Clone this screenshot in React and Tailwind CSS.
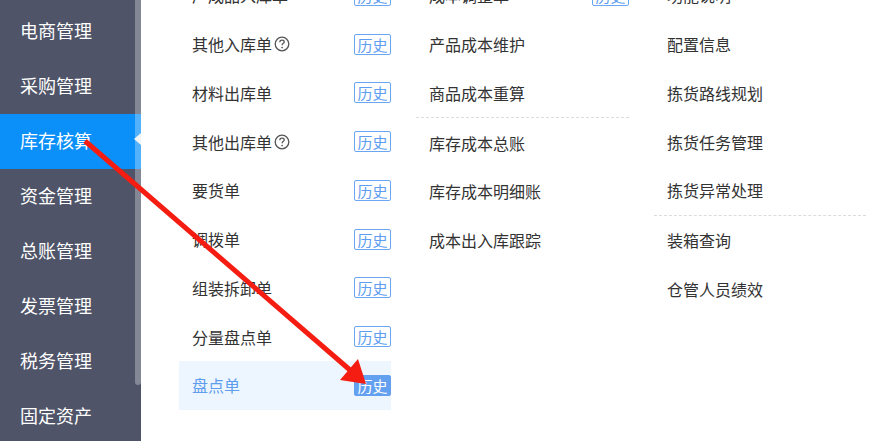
import React from "react";

const font = { fontFamily: '"Noto Sans CJK SC", "Noto Sans", sans-serif' };

const sideItems = ["电商管理", "采购管理", "库存核算", "资金管理", "总账管理", "发票管理", "税务管理", "固定资产"];

function Help() {
  return (
    <svg width="16" height="16" viewBox="0 0 16 16" className="ml-[2px] shrink-0">
      <circle cx="8" cy="8" r="6.8" fill="none" stroke="#555" strokeWidth="1.3" />
      <path d="M5.8 6.2 C5.8 4.7 6.8 4.1 8 4.1 C9.2 4.1 10.2 4.8 10.2 5.9 C10.2 7.3 8.1 7.5 8.1 9.2" fill="none" stroke="#555" strokeWidth="1.3" />
      <circle cx="8.1" cy="11.5" r="0.85" fill="#555" />
    </svg>
  );
}

function Badge({ active }) {
  return (
    <span
      className={
        "w-[37px] h-[21px] rounded-[2px] border flex items-center justify-center text-[15px] leading-none " +
        (active ? "bg-[#63a1f0] border-[#63a1f0] text-white" : "border-[#6ba6f2] text-[#5e9df0] bg-white")
      }
    >
      历史
    </span>
  );
}

function Row({ text, badge, help, active }) {
  return (
    <div
      className={
        "h-[48.75px] shrink-0 flex items-center justify-between pl-[13px] " +
        (active ? "bg-[#edf5fe]" : "")
      }
    >
      <span className={"flex items-center text-[16px] " + (active ? "text-[#5f9eee]" : "text-[#333]")}>
        {text}
        {help && <Help />}
      </span>
      {badge && <Badge active={active} />}
    </div>
  );
}

function Sep() {
  return <div className="border-t border-dashed border-[#dcdcdc] shrink-0" />;
}

export default function App() {
  return (
    <div className="w-[870px] h-[441px] overflow-hidden flex relative bg-white" style={font}>
      {/* Sidebar */}
      <div className="w-[141px] shrink-0 bg-[#4f5468] relative">
        <div className="flex flex-col pt-[4px]">
          {sideItems.map((t, i) => (
            <div
              key={t}
              className={
                "h-[55px] shrink-0 flex items-center pl-[20px] pb-[2px] text-[18px] text-white " +
                (i === 2 ? "bg-[#0b90fa]" : "")
              }
            >
              {t}
            </div>
          ))}
        </div>
        {/* scrollbar thumb */}
        <div className="absolute right-0 top-0 w-[6px] h-[385px] bg-white/30 rounded-b-[3px]" />
        {/* active pointer */}
        <div className="absolute right-0 top-[133px] w-0 h-0 border-y-[6px] border-y-transparent border-r-[7px] border-r-[#f4f4f4]" />
      </div>

      {/* Content */}
      <div className="flex gap-[25px] pl-[38px] mt-[-29px]">
        <div className="w-[212px] flex flex-col">
          <Row text="产成品入库单" badge />
          <Row text="其他入库单" badge help />
          <Row text="材料出库单" badge />
          <Row text="其他出库单" badge help />
          <Row text="要货单" badge />
          <Row text="调拨单" badge />
          <Row text="组装拆卸单" badge />
          <Row text="分量盘点单" badge />
          <Row text="盘点单" badge active />
        </div>
        <div className="w-[213px] flex flex-col">
          <Row text="成本调整单" badge />
          <Row text="产品成本维护" />
          <Row text="商品成本重算" />
          <Sep />
          <Row text="库存成本总账" />
          <Row text="库存成本明细账" />
          <Row text="成本出入库跟踪" />
        </div>
        <div className="w-[212px] flex flex-col">
          <Row text="功能说明" />
          <Row text="配置信息" />
          <Row text="拣货路线规划" />
          <Row text="拣货任务管理" />
          <Row text="拣货异常处理" />
          <Sep />
          <Row text="装箱查询" />
          <Row text="仓管人员绩效" />
        </div>
      </div>

      {/* Red annotation arrow */}
      <svg className="absolute inset-0 pointer-events-none" width="870" height="441" viewBox="0 0 870 441">
        <line x1="85" y1="141" x2="350" y2="370" stroke="#f51d12" strokeWidth="5" />
        <polygon points="366,384 340,380 358,359" fill="#f51d12" />
      </svg>
    </div>
  );
}
